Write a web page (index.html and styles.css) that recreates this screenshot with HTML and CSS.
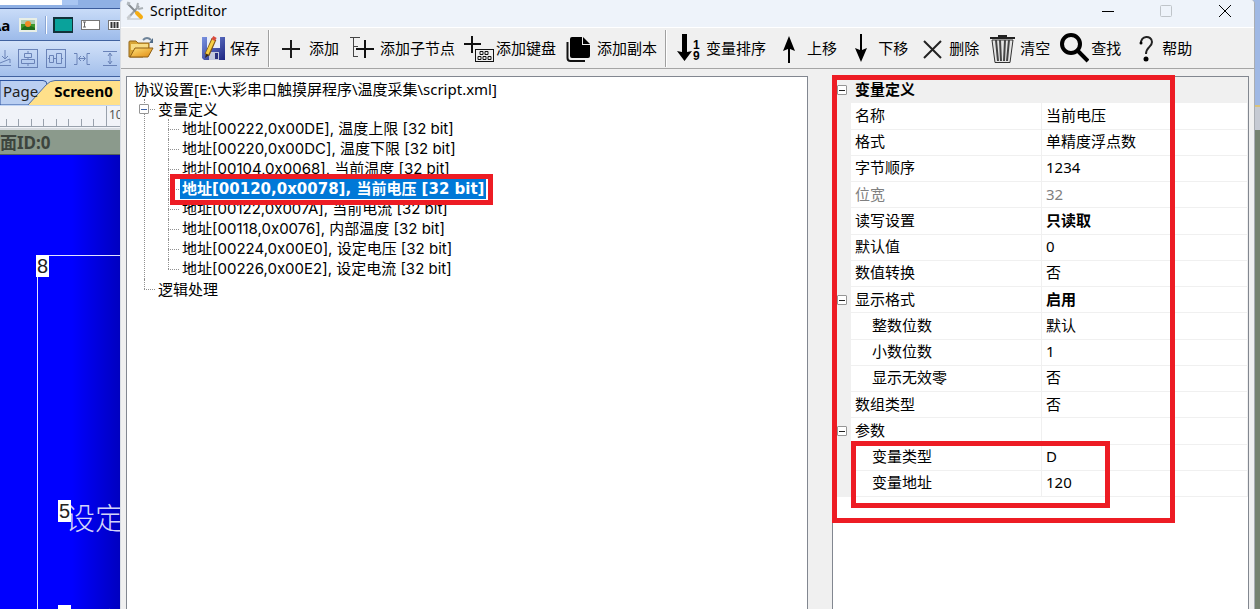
FILE: index.html
```html
<!DOCTYPE html>
<html lang="zh-CN">
<head>
    <meta charset="UTF-8">
    <meta name="viewport" content="width=device-width, initial-scale=1.0">
    <title>ScriptEditor</title>
    <link rel="stylesheet" href="styles.css">
</head>
<body>
    <!-- Main application behind the editor -->
    <div class="designer">
        <div class="designer-top"><input class="top-box" type="text" aria-label="搜索"></div>
        <div class="ribbon">
            <svg width="120" height="31" viewBox="0 0 120 31">
                <text x="-9" y="22" class="ribbon-aa">Aa</text>
                <rect x="19" y="9" width="18" height="14" fill="#e9efe6"/>
                <rect x="21" y="11" width="14" height="5" fill="#a9cdb0"/>
                <rect x="21" y="15" width="14" height="6" fill="#3f9a2c"/>
                <path d="M21 21c3-6 9-5 14-2v2z" fill="#1f6d1c"/>
                <circle cx="28" cy="15" r="3" fill="#f08a24"/>
                <path d="M45.500 7v18" stroke="#8ba6d3"/>
                <path d="M46.500 7v18" stroke="#fff"/>
                <rect x="53" y="8" width="20" height="16" fill="#12323a"/>
                <rect x="55" y="10" width="17" height="12" fill="#0aa29b"/>
                <rect x="81.500" y="11.500" width="18" height="9" fill="#fff" stroke="#777"/>
                <path d="M83 13h3M83 18h3M84.500 13v5" stroke="#666"/>
                <rect x="108.500" y="11.500" width="18" height="9" fill="#fff" stroke="#777"/>
                <path d="M111.500 13v6M114.500 13v6M117.500 13v6" stroke="#333" stroke-width="2"/>
            </svg>
        </div>
        <div class="ribbon ribbon-align">
            <svg width="120" height="33" viewBox="0 0 120 33" fill="none" stroke="#6a83b8">
                <path d="M5 9v9M2 15l3 3 3-3M0 22l10-4v4M0 24.500h11"/>
                <rect x="18.500" y="8.500" width="19" height="18"/>
                <path d="M28 10v2M28 16v2M28 22v3M24.500 12.500h7v4h-7zM21.500 18.500h13v4h-13z"/>
                <rect x="46.500" y="8.500" width="19" height="18"/>
                <path d="M48 17.500h1M53 17.500h3M61 17.500h2M49.500 14.500h4v7h-4zM56.500 12.500h5v10h-5z"/>
                <path d="M74 12.500h3v11h-3M90 12.500h-3v11h3M79 17.500h6M81 15l-2.500 2.500L81 20M83 15l2.500 2.500L83 20"/>
                <path d="M103 10.500h14M103 24.500h14M110 12v11M108 15l2-3 2 3M108 20l2 3 2-3"/>
            </svg>
        </div>
        <div class="tabs">
            <svg class="tabs-shape" width="120" height="27" viewBox="0 0 120 27">
                <path d="M0 2.500h43q4 0 4 4V27H0z" fill="#bacff2" stroke="#2a52a0"/>
                <path d="M28 27L46 7q4-4.500 9-4.500h65V27z" fill="#ffe08a"/>
                <path d="M28 27L46 7q4-4.500 9-4.500h65" fill="none" stroke="#4c6ca8"/>
            </svg>
            <a class="tab" href="#page">Page</a>
            <a class="tab tab-active" href="#screen0">Screen0</a>
        </div>
        <div class="ruler">
            <svg width="120" height="22" viewBox="0 0 120 22">
                <path d="M6.500 13v8M18.500 13v8M31.500 13v8M43.500 13v8M56.500 13v8M68.500 13v8M81.500 13v8M93.500 13v8M106.500 0v21M0 20.500h120" stroke="#99a1ac" fill="none"/>
                <text x="109" y="13" class="ruler-text">100</text>
            </svg>
        </div>
        <div class="screen-id">面ID:0</div>
        <div class="canvas">
            <div class="canvas-frame"></div>
            <span class="canvas-label label-one">设定</span>
            <span class="canvas-label label-two">设定</span>
            <span class="badge badge-eight">8</span>
            <span class="badge badge-five">5</span>
            <span class="badge badge-six">6</span>
        </div>
    </div>

    <!-- Script editor window -->
    <main class="window">
        <header class="titlebar">
            <svg width="20" height="20" viewBox="0 0 20 20">
                <path d="M2 18h15" stroke="#d4d8dc" stroke-width="2"/>
                <path d="M4 16L14 5" stroke="#9da3a8" stroke-width="2"/>
                <path d="M3 15l2 2" stroke="#c8ccd0" stroke-width="4"/>
                <path d="M13 2l-1 4 2 2 4-1" fill="none" stroke="#aab0b5" stroke-width="2"/>
                <path d="M3 3l8 8" stroke="#858b90" stroke-width="2"/>
                <path d="M2 2l3 1" stroke="#b2b8bd" stroke-width="3"/>
                <path d="M12 12l4 4" stroke="#f5ac12" stroke-width="4" stroke-linecap="round"/>
            </svg>
            <h1 class="title">ScriptEditor</h1>
            <div class="window-buttons">
                <button class="window-button" type="button" aria-label="最小化">
                    <svg width="14" height="14" viewBox="0 0 14 14"><path d="M0 7.500h12" stroke="#000"/></svg>
                </button>
                <button class="window-button" type="button" aria-label="最大化" disabled>
                    <svg width="14" height="14" viewBox="0 0 14 14"><rect x="0.500" y="1.500" width="11" height="11" rx="1" fill="none" stroke="#bfc4c9"/></svg>
                </button>
                <button class="window-button" type="button" aria-label="关闭">
                    <svg width="14" height="14" viewBox="0 0 14 14"><path d="M1 1l12 12M13 1L1 13" stroke="#000"/></svg>
                </button>
            </div>
        </header>

        <div class="toolbar">
            <button class="tool" type="button">
                <svg class="icon" viewBox="0 0 32 32">
                    <defs>
                        <linearGradient id="folder" x1="0" y1="0" x2="1" y2="1">
                            <stop offset="0" stop-color="#ffe27a"/>
                            <stop offset="1" stop-color="#e08a10"/>
                        </linearGradient>
                    </defs>
                    <path d="M4 25V10q0-1 1-1h6l2 2h11v5l-6 9z" fill="#d8a536" stroke="#94661a"/>
                    <path d="M6 12h17v6H6z" fill="#f8dc84"/>
                    <path d="M5 25l5-9h18l-5 9z" fill="url(#folder)" stroke="#8e5f14"/>
                    <path d="M18 8q4-4 8 0" fill="none" stroke="#6f8499" stroke-width="2"/>
                    <path d="M24 11l4 0V6z" fill="#4f6a86"/>
                </svg>
                <span>打开</span>
            </button>
            <button class="tool" type="button">
                <svg class="icon" viewBox="0 0 32 32">
                    <defs>
                        <linearGradient id="disk" x1="0" y1="0" x2="1" y2="1">
                            <stop offset="0" stop-color="#7a92e0"/>
                            <stop offset="1" stop-color="#1c2480"/>
                        </linearGradient>
                    </defs>
                    <path d="M6 5h23v23H8l-2-2z" fill="url(#disk)"/>
                    <path d="M11 5h13v11H11z" fill="#e8edf8"/>
                    <path d="M13 20h10v8H13z" fill="#c2c9dd"/>
                    <path d="M19 21h3v6h-3z" fill="#28307c"/>
                    <path d="M18 7l-7 16" stroke="#7d5410" stroke-width="5"/>
                    <path d="M18 7l-7 15" stroke="#f7cf45" stroke-width="3"/>
                    <path d="M17 8l2-3" stroke="#d94b3d" stroke-width="4"/>
                    <path d="M9 26l1-4 3 1z" fill="#3a2a10"/>
                </svg>
                <span>保存</span>
            </button>
            <span class="separator"></span>
            <button class="tool" type="button">
                <svg class="icon" viewBox="0 0 32 32"><path d="M7 17h18M16 8v18" stroke="#1c1c1c" stroke-width="2"/></svg>
                <span>添加</span>
            </button>
            <button class="tool" type="button">
                <svg class="icon" viewBox="0 0 32 32">
                    <path d="M4 5.500h10M7.500 5v20M8 14.500h4M8 24.500h4" fill="none" stroke="#444"/>
                    <path d="M10 17h18M19 8v18" stroke="#111" stroke-width="2"/>
                </svg>
                <span>添加子节点</span>
            </button>
            <button class="tool" type="button">
                <svg class="icon" viewBox="0 0 32 32">
                    <path d="M2 12h17M10 4v17" stroke="#111" stroke-width="2"/>
                    <rect x="13.500" y="17.500" width="18" height="12" fill="#f0f0f0" stroke="#111"/>
                    <path d="M18 19.500h3v3h-3zM23 19.500h3v3h-3zM16 24.500h3v3h-3zM21 24.500h3v3h-3zM26 24.500h3v3h-3z" fill="none" stroke="#111"/>
                </svg>
                <span>添加键盘</span>
            </button>
            <button class="tool" type="button">
                <svg class="icon" viewBox="0 0 32 32">
                    <path d="M4.500 10v16q0 3 3 3H22" fill="none" stroke="#111" stroke-width="2"/>
                    <path d="M9 5h10v8h8v11q0 2-2 2H9q-2 0-2-2V7q0-2 2-2z"/>
                    <path d="M20 5l7 7h-7z"/>
                </svg>
                <span>添加副本</span>
            </button>
            <span class="separator"></span>
            <button class="tool" type="button">
                <svg class="icon" viewBox="0 0 32 32">
                    <path d="M10 2h5v18l5-1-7.500 10L5 19l5 1z"/>
                    <text x="21" y="17" class="icon-digit">1</text>
                    <text x="21" y="28" class="icon-digit">9</text>
                </svg>
                <span>变量排序</span>
            </button>
            <button class="tool" type="button">
                <svg class="icon" viewBox="0 0 32 32"><path d="M16 4l6 15-5-2v14h-2V17l-5 2z"/></svg>
                <span>上移</span>
            </button>
            <button class="tool" type="button">
                <svg class="icon" viewBox="0 0 32 32"><path d="M17 30l-6-14 5 2V2h2v16l5-2z"/></svg>
                <span>下移</span>
            </button>
            <button class="tool" type="button">
                <svg class="icon" viewBox="0 0 32 32"><path d="M9 9l17 17M26 9L9 26" stroke="#222" stroke-width="2"/></svg>
                <span>删除</span>
            </button>
            <button class="tool" type="button">
                <svg class="icon" viewBox="0 0 32 32">
                    <path d="M4 6h25M12 4h9" stroke="#222" stroke-width="2"/>
                    <path d="M6 8l3 22.500h15L27 8z" fill="#e4e4e4" stroke="#333"/>
                    <path d="M10 8l2 21M14 8l1 21M19 8l-1 21M23 8l-2 21" stroke="#444" stroke-width="2"/>
                </svg>
                <span>清空</span>
            </button>
            <button class="tool" type="button">
                <svg class="icon" viewBox="0 0 32 32">
                    <circle cx="14" cy="12" r="9" fill="none" stroke="#000" stroke-width="4"/>
                    <path d="M20 18l11 11" stroke="#000" stroke-width="4"/>
                </svg>
                <span>查找</span>
            </button>
            <button class="tool" type="button">
                <svg class="icon" viewBox="0 0 32 32">
                    <path d="M13 12c-1-9 11-9 11-2 0 5-6 5-6 12" fill="none" stroke="#222" stroke-width="2"/>
                    <circle cx="13" cy="11" r="1.500"/>
                    <circle cx="18" cy="27" r="2.500"/>
                </svg>
                <span>帮助</span>
            </button>
        </div>

        <div class="content">
            <section class="panel tree-panel">
                <div class="node">协议设置[E:\大彩串口触摸屏程序\温度采集\script.xml]</div>
                <ul class="tree">
                    <li>
                        <button class="toggle tree-toggle" type="button" aria-label="折叠"></button>
                        <div class="node">变量定义</div>
                        <ul class="tree addresses">
                            <li><div class="node">地址[00222,0x00DE], 温度上限 [32 bit]</div></li>
                            <li><div class="node">地址[00220,0x00DC], 温度下限 [32 bit]</div></li>
                            <li><div class="node">地址[00104,0x0068], 当前温度 [32 bit]</div></li>
                            <li class="marked"><div class="node selected">地址[00120,0x0078], 当前电压 [32 bit]</div></li>
                            <li><div class="node">地址[00122,0x007A], 当前电流 [32 bit]</div></li>
                            <li><div class="node">地址[00118,0x0076], 内部温度 [32 bit]</div></li>
                            <li><div class="node">地址[00224,0x00E0], 设定电压 [32 bit]</div></li>
                            <li><div class="node">地址[00226,0x00E2], 设定电流 [32 bit]</div></li>
                        </ul>
                    </li>
                    <li><div class="node">逻辑处理</div></li>
                </ul>
            </section>

            <section class="panel property-panel">
                <table class="properties">
                    <colgroup>
                        <col class="col-gutter">
                        <col class="col-name">
                        <col>
                    </colgroup>
                    <tbody>
                        <tr class="category"><td><button class="toggle" type="button" aria-label="折叠"></button></td><th colspan="2">变量定义</th></tr>
                        <tr><td></td><th>名称</th><td>当前电压</td></tr>
                        <tr><td></td><th>格式</th><td>单精度浮点数</td></tr>
                        <tr><td></td><th>字节顺序</th><td>1234</td></tr>
                        <tr class="readonly"><td></td><th>位宽</th><td>32</td></tr>
                        <tr><td></td><th>读写设置</th><td class="changed">只读取</td></tr>
                        <tr><td></td><th>默认值</th><td>0</td></tr>
                        <tr><td></td><th>数值转换</th><td>否</td></tr>
                        <tr><td><button class="toggle" type="button" aria-label="折叠"></button></td><th>显示格式</th><td class="changed">启用</td></tr>
                        <tr class="child"><td></td><th>整数位数</th><td>默认</td></tr>
                        <tr class="child"><td></td><th>小数位数</th><td>1</td></tr>
                        <tr class="child"><td></td><th>显示无效零</th><td>否</td></tr>
                        <tr><td></td><th>数组类型</th><td>否</td></tr>
                        <tr><td><button class="toggle" type="button" aria-label="折叠"></button></td><th>参数</th><td></td></tr>
                        <tr class="child"><td></td><th>变量类型</th><td>D</td></tr>
                        <tr class="child"><td></td><th>变量地址</th><td>120</td></tr>
                    </tbody>
                </table>
                <div class="mark mark-properties"></div>
                <div class="mark mark-address"></div>
            </section>
        </div>
    </main>
    <div class="designer-edge"></div>
</body>
</html>
```
FILE: styles.css
```css
* {
    box-sizing: border-box;
}
body {
    margin: 0;
    height: 100vh;
    display: flex;
    overflow: hidden;
    background: #9fb8e4;
    color: #000;
    font-family: "Noto Sans", "Noto Sans CJK SC", sans-serif;
    font-size: 15px;
    line-height: 20px;
}
button {
    font: inherit;
    color: inherit;
    border: none;
    background: none;
    padding: 0;
}
svg {
    display: block;
    flex: none;
}

/* application in the background */
.designer {
    width: 120px;
    flex: none;
    display: flex;
    flex-direction: column;
    overflow: hidden;
}
.designer-top {
    height: 9px;
    background: #8fb0e4;
    border-bottom: 1px solid #3c5c9c;
}
.top-box {
    display: block;
    width: 78px;
    height: 5px;
    padding: 0;
    border: none;
    border-right: 16px solid #a9c6f2;
    background: #fff;
}
.ribbon {
    height: 32px;
    background: linear-gradient(#c9dcf8, #9dbbea);
    border-bottom: 1px solid #41629f;
}
.ribbon-align {
    height: 36px;
    background: linear-gradient(#d3e2f9, #a3bfeb);
}
.ribbon-aa {
    font: bold 15px "Open Sans", sans-serif;
}
.tabs {
    position: relative;
    height: 29px;
    padding: 2px 0 0 3px;
    display: flex;
    gap: 16px;
    background: #c3d6f5;
}
.tabs-shape {
    position: absolute;
    left: 0;
    top: 1px;
}
.tab {
    position: relative;
    color: #222;
    line-height: 25px;
    text-decoration: none;
}
.tab-active {
    color: #000;
    font-weight: bold;
}
.ruler {
    height: 24px;
    background: #f1f3f8;
    border-bottom: 2px solid #d7dbe0;
}
.ruler-text {
    font: 12px "Noto Sans", sans-serif;
    fill: #555;
}
.screen-id {
    height: 25px;
    line-height: 25px;
    font-size: 17px;
    font-weight: bold;
    color: #3d453e;
    background: #8b9a8c;
    border-bottom: 1px solid #55605a;
    white-space: nowrap;
}
.canvas {
    flex: 1;
    position: relative;
    overflow: hidden;
    background: linear-gradient(to right, #0000ff 60%, #0000c0);
}
.canvas-frame {
    position: absolute;
    left: 37px;
    top: 100px;
    right: -1px;
    bottom: -1px;
    border: 1px solid #e4e4ff;
}
.badge {
    position: absolute;
    width: 13px;
    height: 22px;
    background: #fff;
    color: #222;
    font: 20px/22px "Liberation Sans", sans-serif;
    text-align: center;
}
.badge-eight { left: 36px; top: 100px; }
.badge-five { left: 58px; top: 345px; }
.badge-six { left: 58px; top: 450px; }
.canvas-label {
    position: absolute;
    left: 65px;
    color: #d4d4fa;
    font: 300 30px/34px "Noto Sans CJK SC", sans-serif;
    white-space: nowrap;
}
.label-one { top: 344px; }
.label-two { top: 449px; }
.designer-edge {
    width: 5px;
    flex: none;
    background: linear-gradient(#9fb8e4 0 105px, #d9c27c 105px 107px, #c5cad3 107px 130px, #75826f 130px);
}

/* editor window */
.window {
    flex: 1;
    min-width: 0;
    display: flex;
    flex-direction: column;
    background: #f0f0f0;
    border-left: 1px solid #d9dde3;
    border-right: 1px solid #a9adb3;
    border-radius: 4px 4px 0 0;
}
.titlebar {
    height: 28px;
    padding: 0 0 6px 4px;
    display: flex;
    align-items: center;
    gap: 5px;
    background: #eef3fa;
    border-bottom: 1px solid #fff;
    border-radius: 4px 4px 0 0;
}
.title {
    margin: 0;
    flex: 1;
    font-size: 14px;
    font-weight: normal;
}
.window-buttons {
    display: flex;
}
.window-button {
    width: 58px;
    height: 22px;
    display: flex;
    align-items: center;
    justify-content: center;
}
.toolbar {
    height: 41px;
    padding: 0 2px;
    display: flex;
    align-items: center;
    border-bottom: 1px solid #a5a5a5;
    white-space: nowrap;
}
.tool {
    display: flex;
    align-items: center;
    gap: 2px;
    padding: 0 5px 0 2px;
}
.icon {
    width: 32px;
    height: 32px;
}
.icon-digit {
    font: bold 12px "Liberation Sans", sans-serif;
}
.separator {
    width: 8px;
    height: 37px;
    flex: none;
    background: linear-gradient(to right, transparent 3px, #a0a0a0 3px 4px, #fff 4px 5px, transparent 5px);
}
.content {
    flex: 1;
    min-height: 0;
    display: grid;
    grid-template-columns: 682fr 417fr;
    gap: 24px;
    padding: 7px 5px 0;
}
.panel {
    position: relative;
    min-width: 0;
    background: #fff;
    border: 1px solid #828790;
    border-bottom: none;
}

/* protocol tree */
.tree-panel {
    padding: 2px 7px;
    white-space: nowrap;
}
.tree {
    list-style: none;
    margin: 0;
    padding: 0 0 0 24px;
}
.addresses {
    font-family: Inter, "Noto Sans CJK SC", sans-serif;
}
.tree li {
    position: relative;
}
.tree li::before {
    content: "";
    position: absolute;
    left: -14px;
    top: 0;
    height: 100%;
    border-left: 1px dotted #909090;
}
.tree li:last-child::before {
    height: 10px;
}
.tree li::after {
    content: "";
    position: absolute;
    left: -14px;
    top: 10px;
    width: 11px;
    border-top: 1px dotted #909090;
}
.node {
    height: 20px;
}
.selected {
    width: fit-content;
    margin-left: -2px;
    padding: 0 2px;
    color: #fff;
    background: #0078d7;
    font-family: "DejaVu Sans", "Noto Sans CJK SC", sans-serif;
    font-weight: bold;
}
.marked {
    width: fit-content;
}
.marked .selected::after {
    content: "";
    position: absolute;
    z-index: 1;
    left: -12px;
    right: -7px;
    top: -5px;
    bottom: -6px;
    border: 5px solid #ed1c24;
}
.toggle {
    display: block;
    position: relative;
    width: 10px;
    height: 10px;
    margin: 0 auto;
    background: #fff;
    border: 1px solid #959595;
    border-radius: 1px;
}
.toggle::before {
    content: "";
    position: absolute;
    left: 1px;
    right: 1px;
    top: 4px;
    border-top: 1px solid #222;
}
.tree-toggle {
    position: absolute;
    z-index: 1;
    left: -19px;
    top: 5px;
}
.tree-toggle::before {
    border-color: #3d62a8;
}

/* property grid */
.properties {
    width: 100%;
    height: 420px;
    table-layout: fixed;
    border-collapse: separate;
    border-spacing: 0;
}
.col-gutter {
    width: 18px;
}
.col-name {
    width: 191px;
}
.properties th,
.properties td {
    padding: 0 4px 2px;
    font-weight: normal;
    text-align: left;
    white-space: nowrap;
    border-right: 1px solid #f0f0f0;
    border-bottom: 1px solid #f0f0f0;
}
.properties td:first-child {
    padding: 0;
    background: #f0f0f0;
}
.properties .category th {
    background: #f0f0f0;
    font-weight: bold;
}
.properties .readonly {
    color: #808080;
}
.properties .child th {
    padding-left: 21px;
}
.properties .changed {
    font-weight: bold;
}
.mark {
    position: absolute;
    border: 5px solid #ed1c24;
    pointer-events: none;
}
.mark-properties {
    left: -1px;
    top: -2px;
    width: 343px;
    height: 448px;
}
.mark-address {
    left: 18px;
    top: 364px;
    width: 259px;
    height: 67px;
}
```
